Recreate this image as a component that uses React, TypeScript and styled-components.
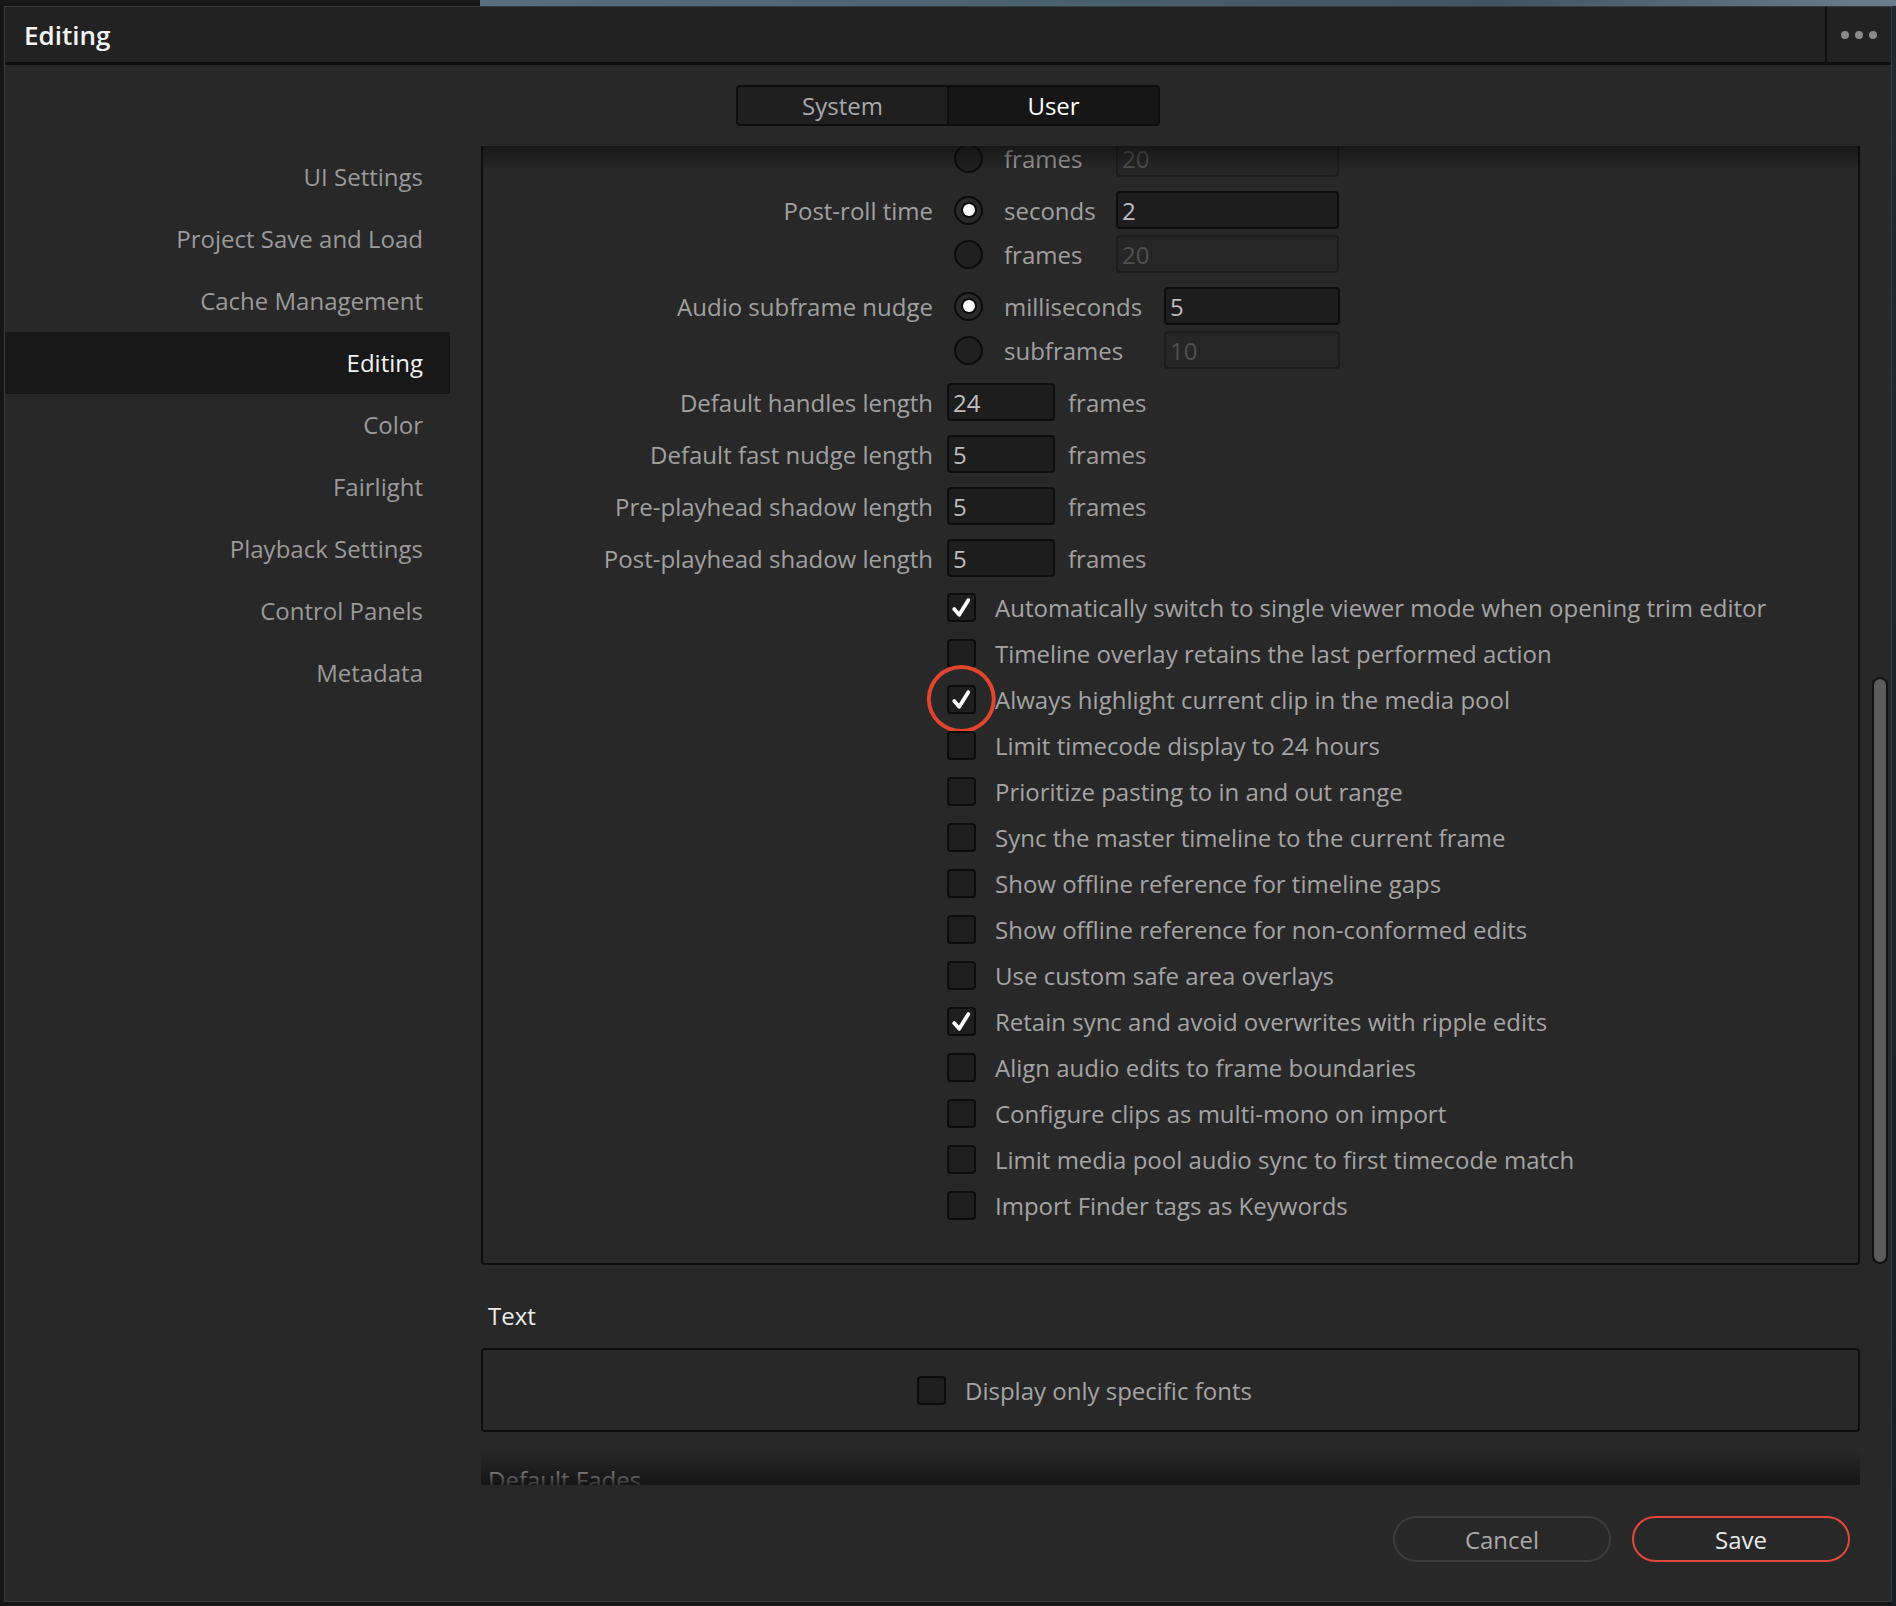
import React, { useLayoutEffect, useRef } from 'react';
import styled, { createGlobalStyle } from 'styled-components';

const GlobalStyle = createGlobalStyle`
  html, body {
    margin: 0;
    padding: 0;
    background: #151515;
  }
  body {
    font-family: "Open Sans", "Noto Sans", sans-serif;
  }
  * { box-sizing: border-box; }
`;

const Page = styled.div`
  width: 1896px;
  height: 1606px;
  padding: 6px 4px 4px 4px;
  background:
    linear-gradient(90deg, #171717 480px, #566e80 480px, #3f5566 1500px, #6a7f8c 1896px) top / 100% 6px no-repeat,
    linear-gradient(180deg, #1d2a33, #13202a) right / 4px 100% no-repeat,
    #151515;
`;

const Window = styled.div`
  height: 100%;
  display: flex;
  flex-direction: column;
  background: #282828;
  border: 1px solid #3a3a3a;
`;

const TitleBar = styled.div`
  height: 58px;
  flex: none;
  display: flex;
  align-items: center;
  background: #222222;
  border-bottom: 3px solid #0f0f0f;
`;

const Title = styled.h1`
  flex: 1;
  margin: 0;
  padding-left: 19px;
  font-size: 26px;
  font-weight: 600;
  color: #f4f4f4;
`;

const MoreButton = styled.div`
  width: 66px;
  height: 100%;
  display: flex;
  align-items: center;
  justify-content: center;
  gap: 6px;
  border-left: 2px solid #0f0f0f;
`;

const Dot = styled.span`
  width: 8px;
  height: 8px;
  border-radius: 50%;
  background: #8a8a8a;
`;

const TabsRow = styled.div`
  flex: none;
  display: flex;
  justify-content: center;
  padding: 20px 0 20px;
`;

const Tabs = styled.div`
  display: flex;
  border: 2px solid #0e0e0e;
  border-radius: 4px;
  background: #0e0e0e;
`;

const Tab = styled.div<{ $active?: boolean }>`
  width: 209px;
  height: 37px;
  display: flex;
  align-items: center;
  justify-content: center;
  font-size: 24px;
  line-height: 30px;
  color: ${(p) => (p.$active ? '#ffffff' : '#a8a8a8')};
  background: ${(p) => (p.$active ? '#161616' : '#1f1f1f')};
  border-radius: 2px;
  & + & {
    margin-left: 2px;
  }
`;

const Body = styled.div`
  flex: 1;
  min-height: 0;
  display: flex;
`;

const Sidebar = styled.nav`
  width: 445px;
  flex: none;
  display: flex;
  flex-direction: column;
  margin-right: 31px;
`;

const NavItem = styled.div<{ $active?: boolean }>`
  height: 62px;
  line-height: 62px;
  padding-right: 27px;
  text-align: right;
  font-size: 24px;
  color: ${(p) => (p.$active ? '#f2f2f2' : '#9a9a9a')};
  background: ${(p) => (p.$active ? '#181818' : 'transparent')};
`;

const Main = styled.div`
  flex: 1;
  min-width: 0;
  display: flex;
  flex-direction: column;
`;

const MainTop = styled.div`
  display: flex;
  height: 1339px;
  padding-right: 3px;
`;

const Viewport = styled.div`
  position: relative;
  width: 1379px;
  height: 100%;
  &::before,
  &::after {
    content: '';
    position: absolute;
    left: 0;
    right: 0;
    pointer-events: none;
    z-index: 2;
  }
  &::before {
    top: 0;
    height: 24px;
    background: linear-gradient(180deg, rgba(10, 10, 10, 0.55), rgba(40, 40, 40, 0));
  }
  &::after {
    bottom: 0;
    height: 34px;
    background: linear-gradient(180deg, rgba(40, 40, 40, 0), rgba(18, 18, 18, 0.85));
  }
`;

const Scroller = styled.div`
  position: relative;
  height: 100%;
  overflow: hidden;
`;

const ScrollTrack = styled.div`
  width: 16px;
  margin-left: 12px;
  display: flex;
  flex-direction: column;
`;

const ScrollThumb = styled.div<{ $offset: number; $size: number }>`
  margin-top: ${(p) => p.$offset}px;
  height: ${(p) => p.$size}px;
  border-radius: 8px;
  background: #5c5c5c;
  border: 2px solid #111111;
`;

const Panel = styled.div`
  display: flex;
  flex-direction: column;
  gap: 8px;
  padding: 20px 0 39px;
  border: 2px solid #0d0d0d;
  border-radius: 4px;
`;

const Row = styled.div`
  display: grid;
  grid-template-columns: 450px 1fr;
  column-gap: 14px;
  align-items: start;
`;

const Label = styled.div`
  height: 44px;
  line-height: 46px;
  text-align: right;
  font-size: 24px;
  color: #a0a0a0;
  white-space: nowrap;
`;

const Controls = styled.div`
  display: flex;
  flex-direction: column;
`;

const Option = styled.div`
  height: 44px;
  display: flex;
  align-items: center;
`;

const Radio = styled.span<{ $on?: boolean }>`
  width: 29px;
  height: 29px;
  margin-left: 7px;
  flex: none;
  display: flex;
  align-items: center;
  justify-content: center;
  border-radius: 50%;
  border: 2px solid #0b0b0b;
  background: ${(p) => (p.$on ? '#2a2a2a' : '#202020')};
  &::after {
    content: '';
    display: ${(p) => (p.$on ? 'block' : 'none')};
    width: 12px;
    height: 12px;
    border-radius: 50%;
    background: #ffffff;
    box-shadow: 0 0 0 2px #0b0b0b;
  }
`;

const OptionText = styled.span<{ $width: number }>`
  width: ${(p) => p.$width}px;
  margin-left: 21px;
  font-size: 24px;
  color: #a0a0a0;
`;

const Field = styled.input<{ $width: number }>`
  width: ${(p) => p.$width}px;
  height: 38px;
  padding: 0 4px;
  margin: 0;
  border: 2px solid #0d0d0d;
  border-radius: 4px;
  background: #1d1d1d;
  color: #bdbdbd;
  font-family: "Open Sans", "Noto Sans", sans-serif;
  font-size: 24px;
  outline: none;
  &:disabled {
    background: #262626;
    border-color: #1d1d1d;
    color: #505050;
  }
`;

const Suffix = styled.span`
  margin-left: 13px;
  font-size: 24px;
  color: #a0a0a0;
`;

const CheckRow = styled.div`
  height: 38px;
  display: flex;
  align-items: center;
`;

const CheckWrap = styled.span`
  position: relative;
  flex: none;
  display: flex;
`;

const Box = styled.span`
  width: 29px;
  height: 29px;
  display: flex;
  align-items: center;
  justify-content: center;
  border: 2px solid #0c0c0c;
  border-radius: 4px;
  background: #1e1e1e;
`;

const Ring = styled.span`
  position: absolute;
  left: 50%;
  top: 50%;
  width: 69px;
  height: 68px;
  transform: translate(-51%, -50%);
  border: 4px solid #e2452f;
  border-radius: 50%;
  pointer-events: none;
`;

const CheckText = styled.span`
  margin-left: 19px;
  font-size: 24px;
  color: #a4a4a4;
  white-space: nowrap;
`;

const SectionTitle = styled.div`
  margin: 34px 0 15px;
  padding-left: 7px;
  line-height: 34px;
  font-size: 24px;
  color: #ececec;
`;

const FadesTitle = styled(SectionTitle)`
  margin-top: 31px;
`;

const TextBox = styled.div`
  height: 84px;
  display: flex;
  align-items: center;
  padding-left: 434px;
  border: 2px solid #0d0d0d;
  border-radius: 4px;
`;

const Filler = styled.div`
  height: 400px;
  border: 2px solid #0d0d0d;
  border-radius: 4px;
`;

const Footer = styled.div`
  flex: 1;
  display: flex;
  justify-content: flex-end;
  align-items: flex-start;
  gap: 21px;
  padding: 31px 41px 0 0;
`;

const Button = styled.button<{ $primary?: boolean }>`
  width: 218px;
  height: 46px;
  border-radius: 23px;
  border: 2px solid ${(p) => (p.$primary ? '#e2493a' : '#3c3c3c')};
  background: transparent;
  color: ${(p) => (p.$primary ? '#e8e8e8' : '#a9a9a9')};
  font-family: "Open Sans", "Noto Sans", sans-serif;
  font-size: 24px;
`;

const CheckMark = () => (
  <svg width="23" height="23" viewBox="0 0 22 22">
    <path d="M4 12.5 L8.8 18 L17.5 4" fill="none" stroke="#ffffff" strokeWidth="3.6" strokeLinecap="round" strokeLinejoin="round" />
  </svg>
);

const Checkbox = ({ checked, ring }: { checked?: boolean; ring?: boolean }) => (
  <CheckWrap>
    <Box>{checked && <CheckMark />}</Box>
    {ring && <Ring />}
  </CheckWrap>
);

const navItems = [
  'UI Settings',
  'Project Save and Load',
  'Cache Management',
  'Editing',
  'Color',
  'Fairlight',
  'Playback Settings',
  'Control Panels',
  'Metadata',
];

type Opt = { text: string; value: string; on?: boolean };
type RadioGroupDef = { label: string; textWidth: number; fieldWidth: number; options: Opt[] };

const radioGroups: RadioGroupDef[] = [
  {
    label: 'Pre-roll time',
    textWidth: 112,
    fieldWidth: 223,
    options: [
      { text: 'seconds', value: '2', on: true },
      { text: 'frames', value: '20' },
    ],
  },
  {
    label: 'Post-roll time',
    textWidth: 112,
    fieldWidth: 223,
    options: [
      { text: 'seconds', value: '2', on: true },
      { text: 'frames', value: '20' },
    ],
  },
  {
    label: 'Audio subframe nudge',
    textWidth: 160,
    fieldWidth: 176,
    options: [
      { text: 'milliseconds', value: '5', on: true },
      { text: 'subframes', value: '10' },
    ],
  },
];

const lengths = [
  { label: 'Default handles length', value: '24' },
  { label: 'Default fast nudge length', value: '5' },
  { label: 'Pre-playhead shadow length', value: '5' },
  { label: 'Post-playhead shadow length', value: '5' },
];

const checks = [
  { text: 'Automatically switch to single viewer mode when opening trim editor', checked: true },
  { text: 'Timeline overlay retains the last performed action' },
  { text: 'Always highlight current clip in the media pool', checked: true, ring: true },
  { text: 'Limit timecode display to 24 hours' },
  { text: 'Prioritize pasting to in and out range' },
  { text: 'Sync the master timeline to the current frame' },
  { text: 'Show offline reference for timeline gaps' },
  { text: 'Show offline reference for non-conformed edits' },
  { text: 'Use custom safe area overlays' },
  { text: 'Retain sync and avoid overwrites with ripple edits', checked: true },
  { text: 'Align audio edits to frame boundaries' },
  { text: 'Configure clips as multi-mono on import' },
  { text: 'Limit media pool audio sync to first timecode match' },
  { text: 'Import Finder tags as Keywords' },
];

const App = () => {
  const scrollerRef = useRef<HTMLDivElement>(null);
  const anchorRef = useRef<HTMLDivElement>(null);

  // the list is shown scrolled down, with the pre-roll "frames" row half under the top edge
  useLayoutEffect(() => {
    const scroller = scrollerRef.current;
    const anchor = anchorRef.current;
    if (!scroller || !anchor) return;
    const s = scroller.getBoundingClientRect();
    const a = anchor.getBoundingClientRect();
    scroller.scrollTop = a.top - s.top + scroller.scrollTop + a.height / 2 - 12;
  }, []);

  return (
    <>
      <GlobalStyle />
      <Page>
        <Window>
          <TitleBar>
            <Title>Editing</Title>
            <MoreButton>
              <Dot />
              <Dot />
              <Dot />
            </MoreButton>
          </TitleBar>
          <TabsRow>
            <Tabs>
              <Tab>System</Tab>
              <Tab $active>User</Tab>
            </Tabs>
          </TabsRow>
          <Body>
            <Sidebar>
              {navItems.map((item) => (
                <NavItem key={item} $active={item === 'Editing'}>
                  {item}
                </NavItem>
              ))}
            </Sidebar>
            <Main>
              <MainTop>
                <Viewport>
                  <Scroller ref={scrollerRef}>
                    <Panel>
                      {radioGroups.map((g, gi) => (
                        <Row key={g.label}>
                          <Label>{g.label}</Label>
                          <Controls>
                            {g.options.map((o, oi) => (
                              <Option key={o.text} ref={gi === 0 && oi === 1 ? anchorRef : undefined}>
                                <Radio $on={o.on} />
                                <OptionText $width={g.textWidth}>{o.text}</OptionText>
                                <Field $width={g.fieldWidth} defaultValue={o.value} disabled={!o.on} readOnly />
                              </Option>
                            ))}
                          </Controls>
                        </Row>
                      ))}
                      {lengths.map((l) => (
                        <Row key={l.label}>
                          <Label>{l.label}</Label>
                          <Option>
                            <Field $width={108} defaultValue={l.value} readOnly />
                            <Suffix>frames</Suffix>
                          </Option>
                        </Row>
                      ))}
                      {checks.map((c) => (
                        <Row key={c.text}>
                          <span />
                          <CheckRow>
                            <Checkbox checked={c.checked} ring={c.ring} />
                            <CheckText>{c.text}</CheckText>
                          </CheckRow>
                        </Row>
                      ))}
                    </Panel>
                    <SectionTitle>Text</SectionTitle>
                    <TextBox>
                      <Checkbox />
                      <CheckText>Display only specific fonts</CheckText>
                    </TextBox>
                    <FadesTitle>Default Fades</FadesTitle>
                    <Filler />
                  </Scroller>
                </Viewport>
                <ScrollTrack>
                  <ScrollThumb $offset={531} $size={587} />
                </ScrollTrack>
              </MainTop>
              <Footer>
                <Button>Cancel</Button>
                <Button $primary>Save</Button>
              </Footer>
            </Main>
          </Body>
        </Window>
      </Page>
    </>
  );
};

export default App;
